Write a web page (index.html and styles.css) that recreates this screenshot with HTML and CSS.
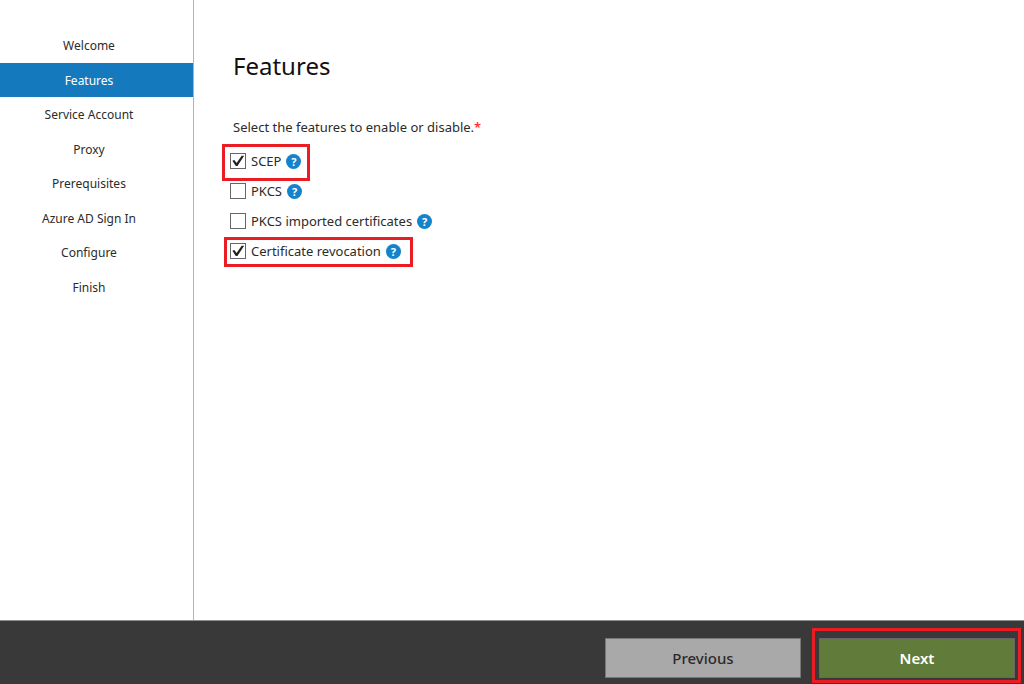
FILE: index.html
```html
<!DOCTYPE html>
<html lang="en">
  <head>
    <meta charset="UTF-8" />
    <meta name="viewport" content="width=device-width, initial-scale=1.0" />
    <title>Features</title>
    <link rel="stylesheet" href="styles.css">
  </head>
  <body>
    <div class="wizard">
      <nav class="steps">
        <a class="step" href="#">Welcome</a>
        <a class="step active" href="#" aria-current="step">Features</a>
        <a class="step" href="#">Service Account</a>
        <a class="step" href="#">Proxy</a>
        <a class="step" href="#">Prerequisites</a>
        <a class="step" href="#">Azure AD Sign In</a>
        <a class="step" href="#">Configure</a>
        <a class="step" href="#">Finish</a>
      </nav>

      <main class="content">
        <h1>Features</h1>
        <p class="prompt">Select the features to enable or disable.<span class="required">*</span></p>

        <div class="options">
          <div class="option marked marked-tall">
            <input type="checkbox" id="scep" checked />
            <label for="scep">SCEP</label>
            <button type="button" class="help">?</button>
          </div>
          <div class="option">
            <input type="checkbox" id="pkcs" />
            <label for="pkcs">PKCS</label>
            <button type="button" class="help">?</button>
          </div>
          <div class="option">
            <input type="checkbox" id="imported" />
            <label for="imported">PKCS imported certificates</label>
            <button type="button" class="help">?</button>
          </div>
          <div class="option marked">
            <input type="checkbox" id="revocation" checked />
            <label for="revocation">Certificate revocation</label>
            <button type="button" class="help">?</button>
          </div>
        </div>
      </main>
    </div>

    <footer class="actions">
      <button type="button" class="btn">Previous</button>
      <div class="marked marked-btn">
        <button type="button" class="btn btn-next">Next</button>
      </div>
    </footer>
  </body>
</html>
```

FILE: styles.css
```css
* {
  box-sizing: border-box;
}

body {
  margin: 0;
  min-height: 100vh;
  display: flex;
  flex-direction: column;
  background: #fff;
  color: #2b2b2b;
  font-family: "Noto Sans", "Open Sans", sans-serif;
  font-size: 13px;
}

.wizard {
  flex: 1;
  display: flex;
}

.steps {
  width: 194px;
  padding-top: 28px;
  border-right: 1px solid #b4b4b4;
  display: grid;
  grid-auto-rows: 35px 34px;
  align-content: start;
  font-size: 12px;
}

.step {
  display: flex;
  align-items: center;
  justify-content: center;
  padding-right: 15px;
  color: #2b2b2b;
  text-decoration: none;
}

.step.active {
  background: #157abd;
  color: #fff;
}

.content {
  flex: 1;
  padding: 49px 39px;
}

h1 {
  margin: 0;
  font-size: 24px;
  font-weight: 400;
  line-height: 34px;
  color: #111;
}

.prompt {
  margin: 34px 0 9px;
  line-height: 20px;
}

.required {
  color: #f33;
  font-weight: 600;
}

.options {
  display: flex;
  flex-direction: column;
  align-items: flex-start;
  margin-left: -3px;
}

.option {
  height: 30px;
  display: flex;
  align-items: center;
  gap: 5px;
}

.option input {
  appearance: none;
  width: 16px;
  height: 16px;
  margin: 0;
  border: 1px solid #666;
  background: #fff;
}

.option input:checked::before {
  content: "";
  display: block;
  height: 100%;
  background: #222;
  clip-path: polygon(10% 48%, 24% 42%, 40% 64%, 76% 12%, 94% 12%, 46% 86%, 34% 86%);
}

.help {
  width: 15px;
  height: 15px;
  padding: 0;
  border: none;
  border-radius: 50%;
  background: #1583cc;
  color: #fff;
  font-family: inherit;
  font-size: 11px;
  font-weight: 700;
  line-height: 15px;
}

/* red callout frames */
.marked {
  position: relative;
}

.marked::after {
  content: "";
  position: absolute;
  inset: 1px -12px -1px -6px;
  border: 3px solid #ea1c24;
  pointer-events: none;
}

.marked-tall::after {
  inset: -2px -9px -5px -8px;
}

.marked-btn::after {
  inset: -10px -6px -5px -7px;
}

.actions {
  display: flex;
  justify-content: flex-end;
  gap: 18px;
  padding: 17px 9px 6px;
  border-top: 1px solid #8b8f8f;
  background: #393939;
}

.btn {
  display: block;
  width: 196px;
  height: 40px;
  padding: 0;
  border: 1px solid #777;
  background: #a9a9a9;
  color: #2b2b2b;
  font-family: inherit;
  font-size: 15px;
  font-weight: 500;
}

.btn-next {
  border-color: #666;
  background: #617b3a;
  color: #fff;
  font-weight: 600;
}
```
